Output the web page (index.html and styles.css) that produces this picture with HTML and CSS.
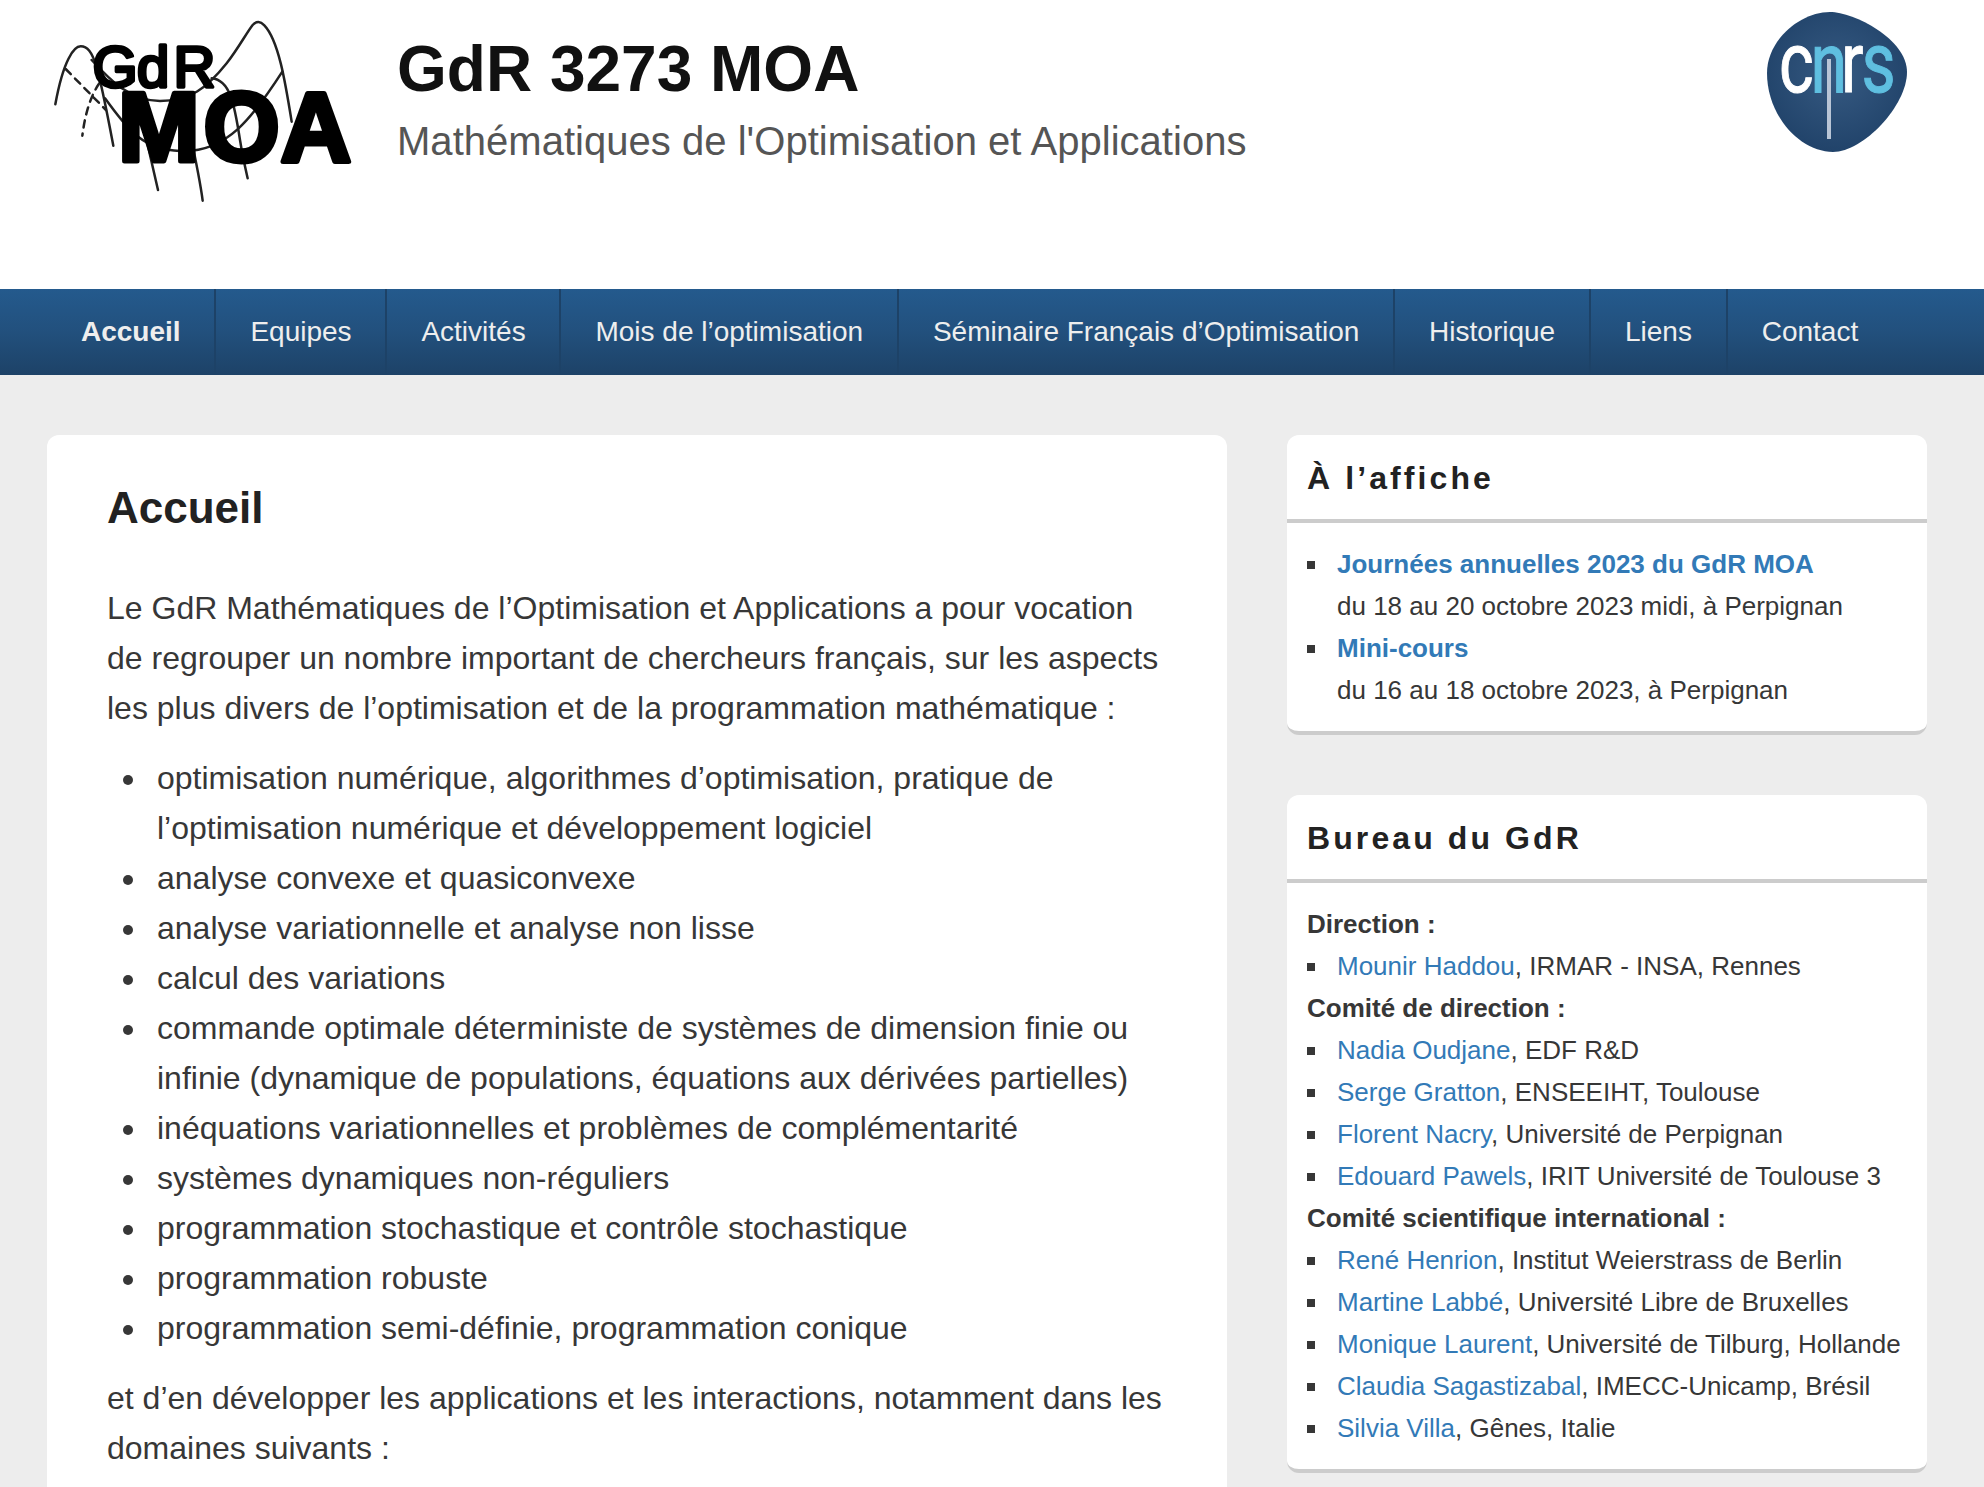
FILE: index.html
```html
<!DOCTYPE html>
<html lang="fr">
<head>
<meta charset="utf-8">
<title>GdR 3273 MOA</title>
<link rel="stylesheet" href="styles.css">
</head>
<body>
<header class="site-header">
  <svg class="logo" viewBox="0 0 320 220" width="320" height="220" role="img" aria-label="GdR MOA">
    <g transform="translate(-17 0) scale(.33333)" fill="none" stroke="#222" stroke-width="7.500" stroke-linecap="round" stroke-linejoin="round">
      <path d="M76 313C100 180 132 139 152 139C192 139 205 200 250 437"/>
      <path d="M185 180C240 240 300 303 390 303C480 303 530 265 590 190C625 145 650 98 668 75Q685 57 703 76C745 120 765 240 785 365"/>
      <path d="M225 295C285 375 330 450 450 453C590 460 670 350 757 215"/>
      <path d="M345 400L384 570M480 400C495 470 510 540 518 602"/>
      <path d="M545 235C600 240 613 310 630 420C638 470 645 500 653 535"/>
      <path d="M107 207L228 330M208 250C180 290 165 345 157 407" stroke-dasharray="22 18"/>
    </g>
    <g class="logo-top"><text x="45.500" y="86.500">G</text><text x="90" y="86.500">d</text><text x="126.500" y="86.500">R</text></g>
    <g class="logo-main"><text x="71" y="160.500">M</text><text x="156.500" y="160.500">O</text><text x="233.500" y="160.500">A</text></g>
  </svg>
  <div class="branding">
    <h1 class="site-title">GdR 3273 MOA</h1>
    <p class="tagline">Mathématiques de l'Optimisation et Applications</p>
  </div>
  <svg class="cnrs" viewBox="1760 0 155 160" width="155" height="160" role="img" aria-label="CNRS">
    <defs><radialGradient id="blob" cx=".5" cy=".45" r=".55"><stop offset="0" stop-color="#365a82"/><stop offset="1" stop-color="#21436a"/></radialGradient></defs>
    <path d="M1830 12C1854 12 1907 39 1907 72C1907 106 1863 152 1833 152C1800 152 1767 116 1767 73C1767 40 1800 12 1830 12Z" fill="url(#blob)"/>
    <g class="cnrs-text">
      <text transform="translate(1779 92) scale(.78 1)">c</text>
      <text class="cyan" transform="translate(1810.500 92) scale(.78 1)">n</text>
      <text transform="translate(1841 92) scale(.78 1)">r</text>
      <text class="cyan" transform="translate(1861.500 92) scale(.78 1)">s</text>
    </g>
    <path d="M1829 59V139" stroke="#b9c5d6" stroke-width="4"/>
  </svg>
</header>
<nav class="menu">
  <a class="current">Accueil</a><a>Equipes</a><a>Activités</a><a>Mois de l’optimisation</a><a>Séminaire Français d’Optimisation</a><a>Historique</a><a>Liens</a><a>Contact</a>
</nav>
<div class="layout">
  <main class="page">
    <h2>Accueil</h2>
    <p>Le GdR Mathématiques de l’Optimisation et Applications a pour vocation<br>de regrouper un nombre important de chercheurs français, sur les aspects<br>les plus divers de l’optimisation et de la programmation mathématique :</p>
    <ul>
      <li>optimisation numérique, algorithmes d’optimisation, pratique de<br>l’optimisation numérique et développement logiciel</li>
      <li>analyse convexe et quasiconvexe</li>
      <li>analyse variationnelle et analyse non lisse</li>
      <li>calcul des variations</li>
      <li>commande optimale déterministe de systèmes de dimension finie ou<br>infinie (dynamique de populations, équations aux dérivées partielles)</li>
      <li>inéquations variationnelles et problèmes de complémentarité</li>
      <li>systèmes dynamiques non-réguliers</li>
      <li>programmation stochastique et contrôle stochastique</li>
      <li>programmation robuste</li>
      <li>programmation semi-définie, programmation conique</li>
    </ul>
    <p>et d’en développer les applications et les interactions, notamment dans les<br>domaines suivants :</p>
  </main>
  <aside class="sidebar">
    <section class="widget">
      <h3>À l’affiche</h3>
      <div class="widget-body">
        <ul>
          <li><a><b>Journées annuelles 2023 du GdR MOA</b></a><br>du 18 au 20 octobre 2023 midi, à Perpignan</li>
          <li><a><b>Mini-cours</b></a><br>du 16 au 18 octobre 2023, à Perpignan</li>
        </ul>
      </div>
    </section>
    <section class="widget">
      <h3>Bureau du GdR</h3>
      <div class="widget-body">
        <b>Direction :</b>
        <ul><li><a>Mounir Haddou</a>, IRMAR - INSA, Rennes</li></ul>
        <b>Comité de direction :</b>
        <ul>
          <li><a>Nadia Oudjane</a>, EDF R&amp;D</li>
          <li><a>Serge Gratton</a>, ENSEEIHT, Toulouse</li>
          <li><a>Florent Nacry</a>, Université de Perpignan</li>
          <li><a>Edouard Pawels</a>, IRIT Université de Toulouse 3</li>
        </ul>
        <b>Comité scientifique international :</b>
        <ul>
          <li><a>René Henrion</a>, Institut Weierstrass de Berlin</li>
          <li><a>Martine Labbé</a>, Université Libre de Bruxelles</li>
          <li><a>Monique Laurent</a>, Université de Tilburg, Hollande</li>
          <li><a>Claudia Sagastizabal</a>, IMECC-Unicamp, Brésil</li>
          <li><a>Silvia Villa</a>, Gênes, Italie</li>
        </ul>
      </div>
    </section>
  </aside>
</div>
</body>
</html>
```
FILE: styles.css
```css
* { box-sizing: border-box; }
body {
  margin: 0;
  height: 1487px;
  overflow: hidden;
  background: #ededed;
  color: #373737;
  font-family: "Liberation Sans", Arial, sans-serif;
}
h1, h2, h3, p, ul { margin: 0; padding: 0; }
ul { list-style: none; }

.site-header {
  display: flex;
  align-items: flex-start;
  height: 289px;
  padding: 0 69px 0 47px;
  background: #fff;
}
.logo { flex: none; overflow: visible; }
.logo text { font-family: "Liberation Sans", Arial, sans-serif; stroke: #000; stroke-linejoin: round; }
.logo-top { font-size: 58px; stroke-width: 3.5px; }
.logo-main { font-size: 98px; font-weight: bold; stroke-width: 5px; }
.branding { margin-left: 30px; padding-top: 31px; white-space: nowrap; }
.site-title { font-size: 64px; line-height: 76px; color: #111; }
.tagline { margin-top: 9px; font-size: 40px; line-height: 50px; letter-spacing: 0.03px; color: #555; }
.cnrs { margin-left: auto; flex: none; }
.cnrs-text { font-family: Roboto, sans-serif; font-size: 85px; fill: #fff; stroke: #fff; stroke-width: 1px; }
.cnrs-text .cyan { fill: #5fbfe0; stroke: #5fbfe0; }

.menu {
  display: flex;
  height: 86px;
  padding-left: 47px;
  background: linear-gradient(#245a8d, #22507d 50%, #1d4267);
}
.menu a {
  padding: 0 33.8px 0 34px;
  border-right: 2px solid #1d4267;
  color: #eee;
  font-size: 28px;
  line-height: 85px;
  white-space: nowrap;
}
.menu a:last-child { border: 0; }
.menu .current { font-weight: bold; }

.layout { display: flex; gap: 60px; padding: 60px 57px 0 47px; }
.page {
  width: 1180px;
  height: 1052px;
  padding: 48px 60px 0;
  border-radius: 12px 12px 0 0;
  background: #fff;
  font-size: 32px;
  line-height: 50px;
  white-space: nowrap;
}
.page h2 { margin-bottom: 50px; font-size: 44px; line-height: 50px; color: #222; }
.page ul { margin: 20px 0; padding-left: 50px; }
.page li::before {
  content: "";
  display: inline-block;
  width: 10px;
  height: 10px;
  margin: 0 24px 0 -34px;
  border-radius: 50%;
  background: #373737;
  vertical-align: 4px;
}

.sidebar { width: 640px; display: flex; flex-direction: column; gap: 60px; }
.widget {
  border-bottom: 4px solid #ccc;
  border-radius: 12px;
  background: #fff;
}
.widget h3 {
  height: 88px;
  padding: 0 20px;
  border-bottom: 4px solid #ccc;
  color: #222;
  font-size: 32px;
  line-height: 86px;
  letter-spacing: 3.1px;
}
.widget-body { padding: 20px; font-size: 26px; line-height: 42px; white-space: nowrap; }
.widget-body ul { padding-left: 30px; }
.widget-body li::before {
  content: "";
  display: inline-block;
  width: 8px;
  height: 8px;
  margin: 0 22px 0 -30px;
  background: #373737;
  vertical-align: 4px;
}
.widget-body b { display: inline-block; }
.widget-body a { color: #327ab7; }
```
